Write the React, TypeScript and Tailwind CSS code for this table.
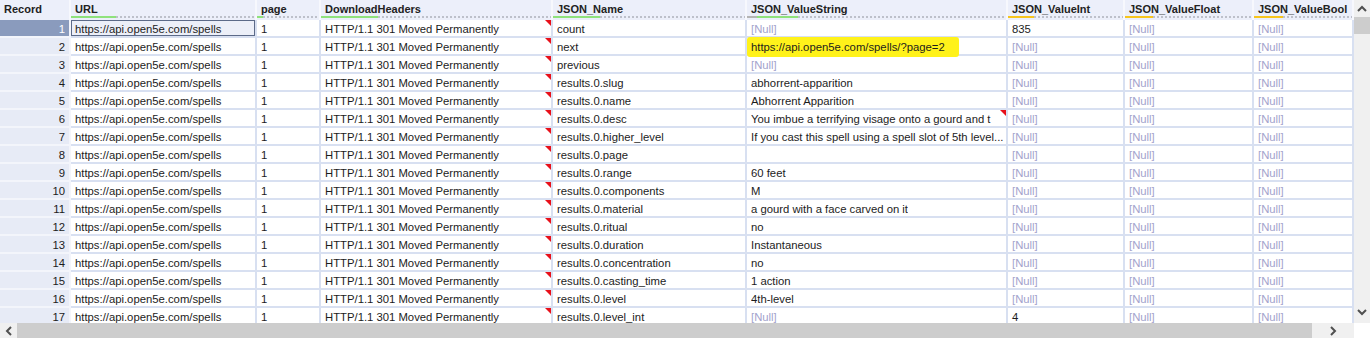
import React from 'react';

type Bar = { color: string; width: string };
type Col = { name: string; width: string; bars: Bar[] };

const GREEN = 'bg-[#8fe27c]';
const YELLOW = 'bg-[#f7c51c]';
const GRAY = 'bg-[#b4b4b4]';

const columns: Col[] = [
  { name: 'Record', width: 'w-[71px]', bars: [] },
  { name: 'URL', width: 'w-[186px]', bars: [{ color: GREEN, width: 'w-[45px]' }] },
  { name: 'page', width: 'w-[64px]', bars: [{ color: GREEN, width: 'w-[6px]' }] },
  { name: 'DownloadHeaders', width: 'w-[232px]', bars: [{ color: GREEN, width: 'w-[57px]' }] },
  { name: 'JSON_Name', width: 'w-[194px]', bars: [{ color: GREEN, width: 'w-[47px]' }] },
  {
    name: 'JSON_ValueString',
    width: 'w-[261px]',
    bars: [
      { color: GRAY, width: 'w-[10px]' },
      { color: GREEN, width: 'w-[41px]' },
    ],
  },
  { name: 'JSON_ValueInt', width: 'w-[117px]', bars: [{ color: YELLOW, width: 'w-[26px]' }] },
  { name: 'JSON_ValueFloat', width: 'w-[129px]', bars: [{ color: YELLOW, width: 'w-[28px]' }] },
  { name: 'JSON_ValueBool', width: 'w-[100px]', bars: [{ color: YELLOW, width: 'w-[29px]' }] },
];

// name, value string (null -> [Null]), value int (null -> [Null]), flags
type Row = { name: string; str: string | null; int: string | null; mark?: boolean; hl?: boolean };

const rows: Row[] = [
  { name: 'count', str: null, int: '835' },
  { name: 'next', str: 'https://api.open5e.com/spells/?page=2', int: null, hl: true },
  { name: 'previous', str: null, int: null },
  { name: 'results.0.slug', str: 'abhorrent-apparition', int: null },
  { name: 'results.0.name', str: 'Abhorrent Apparition', int: null },
  { name: 'results.0.desc', str: 'You imbue a terrifying visage onto a gourd and t', int: null, mark: true },
  { name: 'results.0.higher_level', str: 'If you cast this spell using a spell slot of 5th level...', int: null },
  { name: 'results.0.page', str: '', int: null },
  { name: 'results.0.range', str: '60 feet', int: null },
  { name: 'results.0.components', str: 'M', int: null },
  { name: 'results.0.material', str: 'a gourd with a face carved on it', int: null },
  { name: 'results.0.ritual', str: 'no', int: null },
  { name: 'results.0.duration', str: 'Instantaneous', int: null },
  { name: 'results.0.concentration', str: 'no', int: null },
  { name: 'results.0.casting_time', str: '1 action', int: null },
  { name: 'results.0.level', str: '4th-level', int: null },
  { name: 'results.0.level_int', str: null, int: '4' },
];

const Null = () => <span className="text-[#a3a3cc]">[Null]</span>;

const RedMark = () => (
  <span className="absolute top-0 right-0 w-0 h-0 border-t-[6px] border-l-[6px] border-t-[#e8101a] border-l-transparent" />
);

const cellBase =
  'relative h-full shrink-0 flex items-center pl-[4px] pt-[2px] border-r-2 border-b-2 border-[#d8e0f1] overflow-hidden whitespace-nowrap';

const Chevron = ({ dir }: { dir: 'up' | 'down' | 'left' | 'right' }) => {
  const pts = {
    up: '1,6 5,2 9,6',
    down: '1,2 5,6 9,2',
    left: '6,1 2,5 6,9',
    right: '2,1 6,5 2,9',
  }[dir];
  const vb = dir === 'up' || dir === 'down' ? '0 0 10 8' : '0 0 8 10';
  const size = dir === 'up' || dir === 'down' ? 'w-[10px] h-[8px]' : 'w-[8px] h-[10px]';
  return (
    <svg viewBox={vb} className={size}>
      <polyline points={pts} fill="none" stroke="#505050" strokeWidth="2" />
    </svg>
  );
};

export default function App() {
  return (
    <div
      className="w-[1370px] h-[338px] overflow-hidden bg-white flex flex-col text-[11.3px] text-[#1c1c1c]"
      style={{ fontFamily: '"Liberation Sans", Arial, sans-serif' }}
    >
      <div className="flex h-[323px]">
        {/* grid */}
        <div className="w-[1354px] h-full overflow-hidden">
          {/* header */}
          <div className="flex h-[20px] bg-[#eceffa]">
            {columns.map((c) => (
              <div key={c.name} className={`${c.width} shrink-0 h-full flex flex-col border-r-2 border-[#f7f8fd]`}>
                <div className="pl-[4px] pt-[3px] leading-[13px] text-[11px] font-bold text-[#222] whitespace-nowrap">
                  {c.name}
                </div>
                {c.bars.length > 0 && (
                  <div className="flex mt-auto mb-[2px] h-[2px]">
                    {c.bars.map((b, i) => (
                      <div key={i} className={`${b.width} ${b.color} h-full`} />
                    ))}
                    <div className="flex-1 h-full bg-[image:repeating-linear-gradient(90deg,#bdc0ca_0_2px,transparent_2px_4px)]" />
                  </div>
                )}
              </div>
            ))}
          </div>

          {/* rows */}
          {rows.map((r, i) => {
            const selected = i === 0;
            return (
              <div key={i} className="flex h-[18px]">
                <div
                  className={`w-[71px] shrink-0 h-full flex items-center justify-end pr-[4px] pt-[2px] border-r-2 border-b-2 border-[#f3f5fb] ${
                    selected ? 'bg-[#8a9bbd] text-white' : 'bg-[#e7ebf6]'
                  }`}
                >
                  {i + 1}
                </div>
                <div
                  className={`w-[186px] ${cellBase} ${selected ? 'bg-[#eceff8] shadow-[inset_0_0_0_1px_#5c6a88]' : ''}`}
                >
                  https://api.open5e.com/spells
                </div>
                <div className={`w-[64px] ${cellBase}`}>1</div>
                <div className={`w-[232px] ${cellBase}`}>
                  HTTP/1.1 301 Moved Permanently
                  <RedMark />
                </div>
                <div className={`w-[194px] ${cellBase}`}>{r.name}</div>
                <div className={`w-[261px] ${cellBase} overflow-visible`}>
                  {r.hl && (
                    <span className="absolute left-0 top-[-1px] h-[20px] w-[212px] rounded-[3px] bg-[#fff21a] blur-[0.6px]" />
                  )}
                  <span className="relative overflow-hidden">{r.str === null ? <Null /> : r.str}</span>
                  {r.mark && <RedMark />}
                </div>
                <div className={`w-[117px] ${cellBase}`}>{r.int === null ? <Null /> : r.int}</div>
                <div className={`w-[129px] ${cellBase}`}>
                  <Null />
                </div>
                <div className={`w-[100px] ${cellBase} border-r-0`}>
                  <Null />
                </div>
              </div>
            );
          })}
        </div>

        {/* vertical scrollbar */}
        <div className="w-[16px] h-full bg-[#f0f0f0] flex flex-col items-center">
          <div className="h-[17px] flex items-center justify-center">
            <Chevron dir="up" />
          </div>
          <div className="w-full h-[17px] bg-[#cdcdcd]" />
          <div className="flex-1" />
          <div className="h-[17px] mb-[3px] flex items-center justify-center">
            <Chevron dir="down" />
          </div>
        </div>
      </div>

      {/* horizontal scrollbar */}
      <div className="flex h-[15px]">
        <div className="w-[1354px] h-full bg-[#f0f0f0] flex items-center">
          <div className="w-[17px] h-full flex items-center justify-center">
            <Chevron dir="left" />
          </div>
          <div className="w-[1295px] h-full bg-[#cdcdcd]" />
          <div className="flex-1 h-full flex items-center justify-center">
            <Chevron dir="right" />
          </div>
        </div>
        <div className="w-[16px] h-full bg-white" />
      </div>
    </div>
  );
}
